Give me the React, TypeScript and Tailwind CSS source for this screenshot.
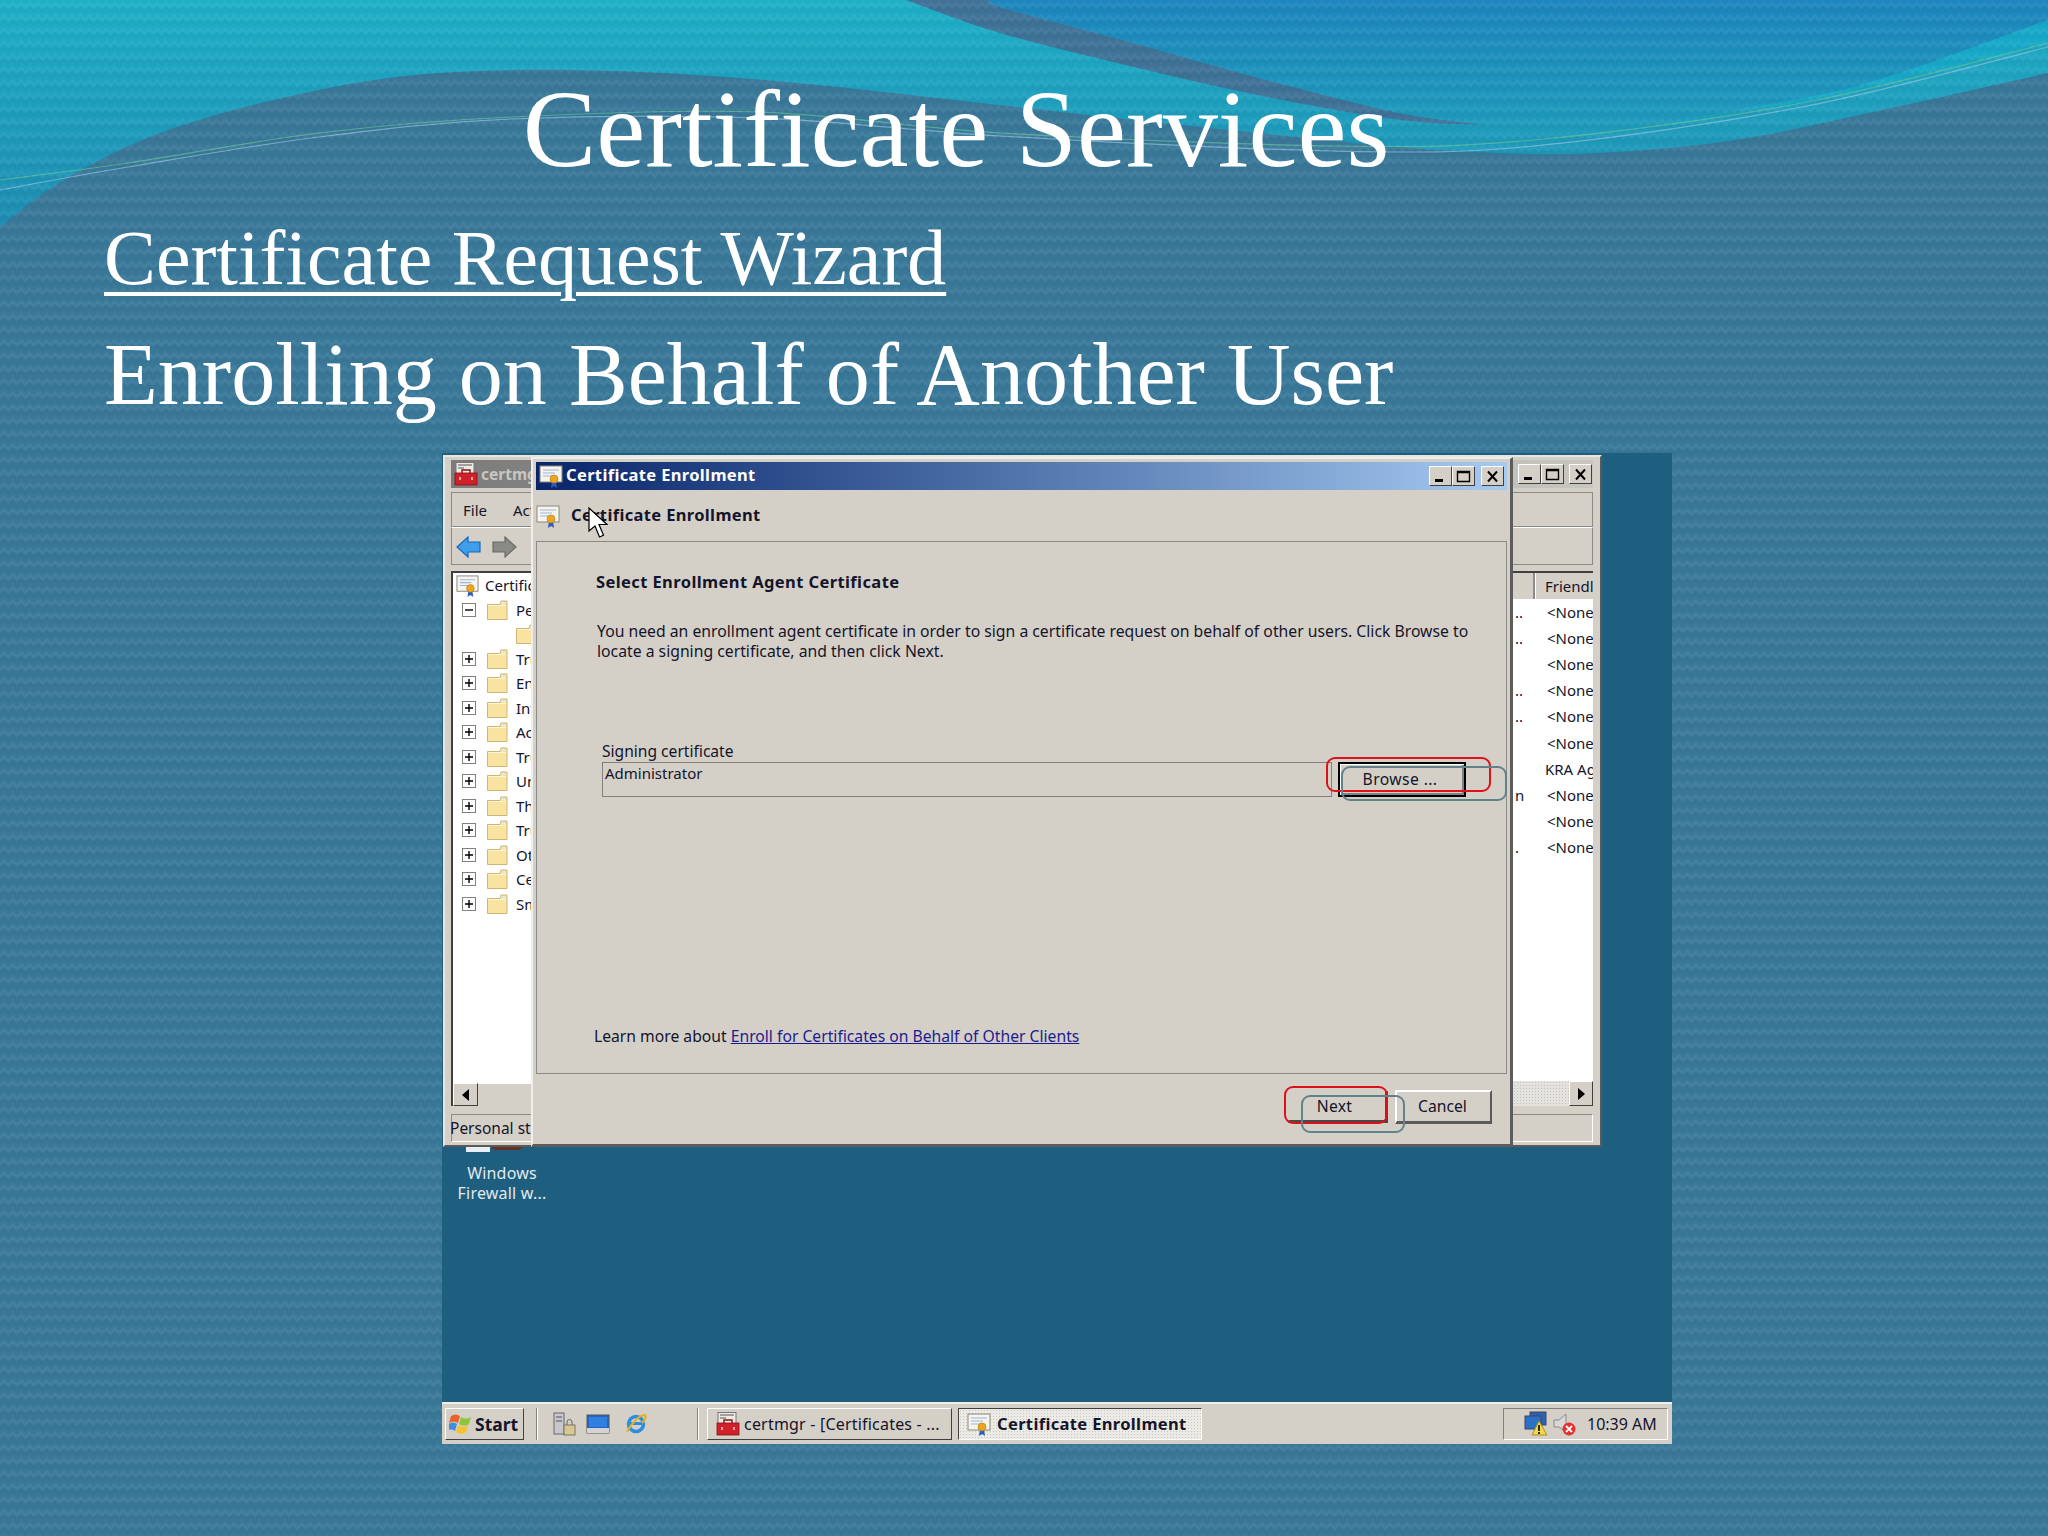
import React from "react";

function smooth(pts: number[][]): string {
  let d = `M${pts[0][0]},${pts[0][1]}`;
  for (let i = 0; i < pts.length - 1; i++) {
    const p0 = pts[Math.max(0, i - 1)];
    const p1 = pts[i];
    const p2 = pts[i + 1];
    const p3 = pts[Math.min(pts.length - 1, i + 2)];
    const c1x = p1[0] + (p2[0] - p0[0]) / 6;
    const c1y = p1[1] + (p2[1] - p0[1]) / 6;
    const c2x = p2[0] - (p3[0] - p1[0]) / 6;
    const c2y = p2[1] - (p3[1] - p1[1]) / 6;
    d += ` C${c1x},${c1y} ${c2x},${c2y} ${p2[0]},${p2[1]}`;
  }
  return d;
}
const tail = (d: string) => d.replace(/^M[^ ]+/, "");

const hump = [[2048,73],[1868,113],[1735,140],[1601,153],[1501,153],[1400,147],[1134,120],[1000,105],[765,80],[574,70],[415,75],[287,97],[160,133],[64,180],[0,227]];
const outer = [[906,0],[1000,33],[1134,67],[1267,97],[1400,120],[1488,125]];
const inner = [[992,0],[1000,7],[1134,43],[1267,80],[1400,113],[1488,125]];
const blueLow = [[1488,125],[1601,130],[1735,110],[1868,83],[2048,20]];
const line1 = [[0,180],[128,163],[319,133],[510,117],[760,112],[1000,133],[1334,146],[1534,140],[1802,103],[2048,43]];
const line2 = [[0,190],[128,167],[319,137],[510,119],[760,118],[1000,136],[1334,151],[1534,146],[1802,107],[2048,47]];

function Backdrop() {
  return (
    <svg className="absolute inset-0" width="2048" height="1536" viewBox="0 0 2048 1536">
      <defs>
        <linearGradient id="teal" x1="0" y1="0" x2="0" y2="1">
          <stop offset="0" stopColor="#1fb0c8" />
          <stop offset="1" stopColor="#1f8cb2" />
        </linearGradient>
        <linearGradient id="blue" x1="0" y1="0" x2="0" y2="1">
          <stop offset="0" stopColor="#1d86be" />
          <stop offset="1" stopColor="#1f9cbc" />
        </linearGradient>
        <pattern id="knit" width="17" height="13" patternUnits="userSpaceOnUse">
          <path d="M0,7 L4.25,3 L8.5,7 L12.75,3 L17,7" fill="none" stroke="#ffffff" strokeOpacity="0.05" strokeWidth="3" />
          <path d="M0,12 L4.25,8 L8.5,12 L12.75,8 L17,12" fill="none" stroke="#000000" strokeOpacity="0.03" strokeWidth="3" />
        </pattern>
      </defs>
      <rect width="2048" height="1536" fill="#3a7899" />
      <path d={`M0,0 L2048,0 L2048,73 ${tail(smooth(hump))} Z`} fill="url(#teal)" />
      <path d={`${smooth(outer)} ${tail(smooth([...inner].reverse()))} Z`} fill="#3f7398" />
      <path d={`${smooth(inner)} ${tail(smooth(blueLow))} L2048,0 Z`} fill="url(#blue)" />
      <path d={`M2048,20 ${tail(smooth([...blueLow].reverse().slice(0, 3)))} L1802,103 L2048,43 Z`} fill="#18a8c8" />
      <path d={smooth(line1)} fill="none" stroke="#63c29a" strokeOpacity="0.7" strokeWidth="1.2" />
      <path d={smooth(line2)} fill="none" stroke="#9cc6e4" strokeOpacity="0.65" strokeWidth="1.2" />
      <rect width="2048" height="1536" fill="url(#knit)" />
    </svg>
  );
}

function CertIcon({ size = 24 }: { size?: number }) {
  return (
    <svg width={size} height={size} viewBox="0 0 24 24" className="shrink-0">
      <rect x="1" y="2" width="22" height="16" fill="#f6f4ee" stroke="#8a8878" strokeWidth="1" />
      <path d="M4 6h16M4 9h12M4 12h9" stroke="#9db4d8" strokeWidth="1.2" />
      <path d="M13 17l-1 7 3-2 3 2-1-7z" fill="#2a5cc0" />
      <circle cx="15" cy="15" r="4" fill="#e8a623" stroke="#b57a10" strokeWidth="0.6" />
    </svg>
  );
}

function MgrIcon({ size = 24 }: { size?: number }) {
  return (
    <svg width={size} height={size} viewBox="0 0 24 24" className="shrink-0">
      <rect x="2" y="0.5" width="18" height="15" fill="#eceae4" stroke="#777" strokeWidth="1" />
      <path d="M4 3h14M4 6h6" stroke="#555" strokeWidth="1.2" />
      <rect x="1" y="11" width="22" height="12" fill="#d0202a" stroke="#8a1016" strokeWidth="0.8" />
      <path d="M8 11V8h8v3" fill="none" stroke="#8a1016" strokeWidth="1.4" />
      <path d="M6 15v3M18 15v3" stroke="#f6c0c0" strokeWidth="1.6" />
    </svg>
  );
}

function Folder({ w = 21 }: { w?: number }) {
  return (
    <svg width={w} height="20" viewBox="0 0 21 20" className="shrink-0">
      <path d="M0.5 4.5 H13 L14 1 H20 V19.5 H0.5 Z" fill="#f8e3a0" stroke="#cdb672" strokeWidth="1" />
      <rect x="14" y="2" width="5" height="2" fill="#dce8f0" />
      <path d="M1.5 5.5 H19" stroke="#fff6d8" strokeWidth="1" />
    </svg>
  );
}

function Expander({ open }: { open?: boolean }) {
  return (
    <svg width="14" height="14" viewBox="0 0 14 14" className="shrink-0">
      <rect x="0.5" y="0.5" width="13" height="13" fill="#fff" stroke="#808080" />
      <path d={open ? "M3 7h8" : "M3 7h8M7 3v8"} stroke="#000" strokeWidth="1.4" />
    </svg>
  );
}

function WinBtn({ kind }: { kind: "min" | "max" | "close" }) {
  return (
    <div className="flex h-[20px] w-[23px] items-center justify-center border border-t-white border-l-white border-r-[#404040] border-b-[#404040] bg-[#d4d0c8]">
      <svg width="17" height="15" viewBox="0 0 17 15">
        {kind === "min" && <rect x="3" y="10" width="8" height="3" fill="#000" />}
        {kind === "max" && <path d="M2.5 2.5h12v10h-12z M2.5 3.5h12" fill="none" stroke="#000" strokeWidth="1.4" />}
        {kind === "close" && <path d="M4 2.5l9 10M13 2.5l-9 10" stroke="#000" strokeWidth="2" />}
      </svg>
    </div>
  );
}

const tree: string[] = [
  "Trusted Root",
  "Enterprise",
  "Intermediate",
  "Active Directory",
  "Trusted Publishers",
  "Untrusted",
  "Third-Party",
  "Trusted People",
  "Other People",
  "Certificate",
  "Smart Card",
];

const listRows: [string, string][] = [
  ["..", "<None>"],
  ["..", "<None>"],
  ["", "<None>"],
  ["..", "<None>"],
  ["..", "<None>"],
  ["", "<None>"],
  ["", "KRA Agent"],
  ["n", "<None>"],
  ["", "<None>"],
  [".", "<None>"],
];

function CertMgrWindow() {
  return (
    <div className="absolute left-[1px] top-[2px] flex h-[692px] w-[1159px] flex-col border-t-2 border-l-2 border-r-2 border-b-2 border-t-[#e8e6e0] border-l-[#e8e6e0] border-r-[#5a5a5a] border-b-[#5a5a5a] bg-[#d4d0c8] pt-[3px] pl-[6px] pr-[7px] text-[15px] leading-[20px] text-[#14142a]">
      <div className="flex h-[28px] items-center justify-between bg-linear-to-r from-[#7c7c7c] to-[#c8c6c0] pr-[1px]">
        <div className="flex items-center gap-[3px] pl-[3px]">
          <MgrIcon size={24} />
          <span className="text-[15.5px] font-bold text-[#c8c6c0]">certmgr</span>
        </div>
        <div className="flex items-center">
          <WinBtn kind="min" />
          <WinBtn kind="max" />
          <div className="ml-[5px]">
            <WinBtn kind="close" />
          </div>
        </div>
      </div>
      <div className="mt-[4px] flex h-[35px] items-center gap-[26px] border border-[#8a8a8a] pl-[11px]">
        <span>File</span>
        <span>Action</span>
      </div>
      <div className="flex h-[38px] items-center gap-[11px] border border-t-white border-l-[#8a8a8a] border-r-[#8a8a8a] border-b-[#8a8a8a] pl-[4px] pt-[2px]">
        <svg width="25" height="22" viewBox="0 0 25 22">
          <path d="M1 11L12 1v5h12v10H12v5z" fill="#3f9ee8" stroke="#1a66b8" strokeWidth="1.2" />
        </svg>
        <svg width="25" height="22" viewBox="0 0 25 22">
          <path d="M24 11L13 1v5H1v10h12v5z" fill="#8a8a86" stroke="#6a6a66" strokeWidth="1.2" />
        </svg>
        <div className="ml-[9px] h-[28px] w-[2px] bg-[#9a9a94]" />
      </div>
      <div className="mt-[6px] flex h-[535px] border-t-2 border-l-2 border-[#404040] bg-white">
        <div className="flex w-[79px] shrink-0 flex-col overflow-hidden">
          <div className="flex h-[24.5px] shrink-0 items-center whitespace-nowrap pl-[3px]">
            <CertIcon size={23} />
            <span className="ml-[6px]">Certificates</span>
          </div>
          <div className="flex h-[24.5px] shrink-0 items-center whitespace-nowrap pl-[9px]">
            <Expander open />
            <span className="ml-[11px] flex"><Folder /></span>
            <span className="ml-[8px]">Personal</span>
          </div>
          <div className="flex h-[24.5px] shrink-0 items-center whitespace-nowrap pl-[63px]">
            <Folder />
          </div>
          {tree.map((label) => (
            <div key={label} className="flex h-[24.5px] shrink-0 items-center whitespace-nowrap pl-[9px]">
              <Expander />
              <span className="ml-[11px] flex"><Folder /></span>
              <span className="ml-[8px]">{label}</span>
            </div>
          ))}
          <div className="mt-auto flex h-[23px] shrink-0 items-stretch bg-[#d4d0c8]">
            <div className="flex w-[25px] items-center justify-center border border-t-white border-l-white border-r-[#404040] border-b-[#404040]">
              <svg width="8" height="12" viewBox="0 0 8 12"><path d="M7 0v12L0 6z" fill="#000" /></svg>
            </div>
            <div className="flex-1 border-t border-t-white bg-[#d4d0c8]" />
          </div>
        </div>
        <div className="flex-1" />
        <div className="flex w-[80px] shrink-0 flex-col overflow-hidden">
          <div className="flex h-[26px] shrink-0 items-stretch bg-[#d4d0c8]">
            <div className="w-[22px] shrink-0 border-r-2 border-r-[#8a8a8a]" />
            <div className="whitespace-nowrap border-l border-l-white pl-[9px] leading-[26px]">Friendly Name</div>
          </div>
          <div className="flex flex-col">
            {listRows.map(([a, b], i) => (
              <div key={i} className="flex h-[26.1px] items-center whitespace-nowrap">
                <span className="w-[10px] shrink-0 pl-[2px]">{a}</span>
                <span className={b === "<None>" ? "ml-[24px]" : "ml-[22px]"}>{b}</span>
              </div>
            ))}
          </div>
          <div className="mt-auto flex h-[25px] shrink-0 items-stretch">
            <div className="flex-1 bg-[#e4e2dc] bg-[radial-gradient(#c4c2bc_0.7px,transparent_0.8px)] bg-[length:3px_3px]" />
            <div className="flex w-[24px] items-center justify-center border border-t-white border-l-white border-r-[#404040] border-b-[#404040] bg-[#d4d0c8]">
              <svg width="8" height="12" viewBox="0 0 8 12"><path d="M1 0v12l7-6z" fill="#000" /></svg>
            </div>
          </div>
        </div>
      </div>
      <div className="mt-[8px] flex h-[28px] justify-between border border-t-[#8a8a8a] border-l-[#8a8a8a] border-r-white border-b-white">
        <span className="-ml-[2px] whitespace-nowrap text-[15.5px] leading-[26px]">Personal store</span>
      </div>
    </div>
  );
}

function Bevel({ children, className }: { children: React.ReactNode; className: string }) {
  return (
    <div className={`flex items-center justify-center bg-[#d4d0c8] ${className}`}>{children}</div>
  );
}

function EnrollDialog() {
  return (
    <div className="absolute left-[89px] top-[4px] flex h-[690px] w-[982px] flex-col border-t-2 border-l-2 border-r-[3px] border-b-[3px] border-t-[#efeeea] border-l-[#efeeea] border-r-[#5c5c5c] border-b-[#5c5c5c] bg-[#d4d0c8] pl-[3px] pr-[3px] pt-[3px] text-[15px] text-[#14142a]">
      <div className="flex h-[28px] shrink-0 items-center justify-between bg-linear-to-r from-[#0a246a] to-[#a6caf0] pr-[3px]">
        <div className="flex items-center gap-[3px] pl-[3px]">
          <CertIcon size={24} />
          <span className="-mt-[2px] text-[16.5px] font-bold tracking-[0.35px] text-white">Certificate Enrollment</span>
        </div>
        <div className="flex items-center">
          <WinBtn kind="min" />
          <WinBtn kind="max" />
          <div className="ml-[6px]">
            <WinBtn kind="close" />
          </div>
        </div>
      </div>
      <div className="flex h-[51px] shrink-0 items-center gap-[11px]">
        <CertIcon size={24} />
        <span className="-mt-[1px] text-[16.5px] font-bold tracking-[0.35px]">Certificate Enrollment</span>
      </div>
      <div className="relative flex h-[533px] shrink-0 flex-col border-[1.5px] border-[#8a8a86] pl-[59px]">
        <h2 className="mt-[29px] text-[16.5px] font-bold leading-[22px] tracking-[0.4px]">Select Enrollment Agent Certificate</h2>
        <p className="ml-[1px] mt-[28px] w-[900px] text-[15.75px] leading-[20px]">
          You need an enrollment agent certificate in order to sign a certificate request on behalf of other users. Click Browse to
          <br />
          locate a signing certificate, and then click Next.
        </p>
        <div className="ml-[6px] mt-[80px] text-[15.6px] leading-[20px]">Signing certificate</div>
        <div className="ml-[6px] mt-[1px] flex items-start">
          <div className="h-[35px] w-[730px] border border-[#808080] pl-[2px] leading-[20px]">Administrator</div>
          <button className="ml-[6px] flex h-[35px] w-[128px] items-center justify-center border-2 border-black bg-[#d4d0c8] pr-[4px] text-[15.7px] tracking-[0.4px] shadow-[inset_1px_1px_0_#ffffff,inset_-2px_-2px_0_#808080]">
            Browse ...
          </button>
        </div>
        <div className="-ml-[2px] mb-[27px] mt-auto text-[15.7px] leading-[20px]">
          Learn more about <a className="text-[#1c1c8e] underline">Enroll for Certificates on Behalf of Other Clients</a>
        </div>
      </div>
      <div className="flex flex-1 items-start justify-end gap-[7px] pr-[15px] pt-[16px] text-[15.7px]">
        <Bevel className="mt-[1px] h-[32px] w-[100px] border-b-[3px] border-r-[3px] border-t border-l border-r-[#4a4a4a] border-b-[#4a4a4a] border-t-[#d4d0c8] border-l-[#d4d0c8]">
          <span className="-ml-[5px] mt-[1px] tracking-[0.3px]">Next</span>
        </Bevel>
        <Bevel className="h-[34px] w-[97px] border-b-[3px] border-r-[2px] border-t-2 border-l-2 border-r-[#5a5a5a] border-b-[#5a5a5a] border-t-white border-l-white">
          <span className="-ml-[2px]">Cancel</span>
        </Bevel>
      </div>
      <div className="pointer-events-none absolute left-[793px] top-[298px] h-[35px] w-[165px] rounded-[9px] border-2 border-[#e01018]" />
      <div className="pointer-events-none absolute left-[808px] top-[307px] h-[35px] w-[166px] rounded-[9px] border-2 border-[#62828a]" />
      <div className="pointer-events-none absolute left-[751px] top-[627px] h-[38px] w-[104px] rounded-[9px] border-2 border-[#e01018]" />
      <div className="pointer-events-none absolute left-[768px] top-[636px] h-[38px] w-[104px] rounded-[9px] border-2 border-[#62828a]" />
    </div>
  );
}

function Cursor() {
  return (
    <svg className="absolute left-[146px] top-[54px]" width="20" height="32" viewBox="0 0 20 32">
      <path d="M1 1v23l6-5 4.5 11 4-1.8L11 17.5h8z" fill="#fff" stroke="#000" strokeWidth="1.2" />
    </svg>
  );
}

function Taskbar() {
  return (
    <div className="flex h-[42px] shrink-0 items-center gap-0 border-t-2 border-t-[#efeeea] bg-[#d4d0c8] pl-[3px] pr-[4px] text-[16px] text-[#14142a]">
      <div className="flex h-[32px] w-[79px] items-center gap-[2px] border border-t-white border-l-white border-r-[#404040] border-b-[#404040] pl-[3px]">
        <svg width="24" height="24" viewBox="0 0 24 24" className="shrink-0">
          <path d="M2 4c3-2 6-2 9 0l-2 7c-3-2-6-2-9 0z" fill="#e8622a" />
          <path d="M12 5c3 2 6 2 10 0l-2 7c-3 2-7 2-10 0z" fill="#8cc63f" />
          <path d="M0 12c3-2 5-2 8 0l-2 7c-3-2-5-2-8 0z" fill="#3f8fe0" />
          <path d="M9 13c3 2 7 2 10 0l-2 7c-3 2-7 2-10 0z" fill="#f4c430" />
        </svg>
        <span className="text-[17.5px] font-bold">Start</span>
      </div>
      <div className="ml-[12px] h-[32px] w-[2px] border-l border-r border-l-[#808080] border-r-white" />
      <div className="ml-[14px] flex items-center gap-[10px]">
        <svg width="24" height="24" viewBox="0 0 24 24">
          <rect x="2" y="1" width="10" height="21" fill="#c8c8cc" stroke="#666" />
          <path d="M4 5h6M4 9h6" stroke="#555" />
          <rect x="12" y="13" width="11" height="10" fill="#d8c890" stroke="#776" />
          <path d="M15 13v-3a2.5 2.5 0 015 0v3" fill="none" stroke="#666" />
        </svg>
        <svg width="24" height="24" viewBox="0 0 24 24">
          <rect x="1" y="3" width="22" height="18" fill="#2a62c8" stroke="#555" />
          <rect x="3" y="5" width="18" height="10" fill="#2f80e0" />
          <rect x="1" y="16" width="22" height="5" fill="#d4d4d4" />
        </svg>
        <svg className="ml-[4px]" width="24" height="24" viewBox="0 0 24 24">
          <circle cx="12" cy="12" r="7.5" fill="none" stroke="#2a8fe0" strokeWidth="3.5" />
          <path d="M6 11.5h13" stroke="#2a8fe0" strokeWidth="3" />
          <path d="M3 20C8 10 16 3 21 3c2 2-1 6-3 8" fill="none" stroke="#e8b020" strokeWidth="2" />
        </svg>
      </div>
      <div className="ml-[49px] h-[32px] w-[2px] border-l border-r border-l-[#808080] border-r-white" />
      <div className="ml-[8px] flex h-[32px] w-[245px] items-center gap-[4px] border border-t-white border-l-white border-r-[#404040] border-b-[#404040] pl-[8px]">
        <MgrIcon size={24} />
        <span className="whitespace-nowrap tracking-[0.2px]">certmgr - [Certificates - ...</span>
      </div>
      <div className="ml-[6px] flex h-[32px] w-[244px] items-center gap-[6px] border border-t-[#404040] border-l-[#404040] border-r-white border-b-white bg-[#eceae4] bg-[radial-gradient(#c8c6c0_0.7px,transparent_0.8px)] bg-[length:3px_3px] pl-[8px]">
        <CertIcon size={24} />
        <span className="whitespace-nowrap text-[16.5px] font-bold tracking-[0.35px]">Certificate Enrollment</span>
      </div>
      <div className="ml-auto flex h-[32px] w-[165px] items-center border border-t-[#808080] border-l-[#808080] border-r-white border-b-white pl-[20px]">
        <svg width="25" height="26" viewBox="0 0 25 26">
          <rect x="6" y="1" width="16" height="13" fill="#2a62b8" stroke="#445" />
          <rect x="1" y="5" width="16" height="13" fill="#2a70c8" stroke="#445" />
          <path d="M15 10l-7 14h15z" fill="#f4d84a" stroke="#a89020" />
          <path d="M15 14v6M15 21v2" stroke="#000" strokeWidth="1.6" />
        </svg>
        <svg className="ml-[3px]" width="25" height="26" viewBox="0 0 25 26">
          <path d="M2 9h5l7-6v18l-7-5H2z" fill="#d8d8d8" stroke="#888" />
          <circle cx="17" cy="18" r="6.5" fill="#e83030" />
          <path d="M14 15l6 6M20 15l-6 6" stroke="#fff" strokeWidth="1.8" />
        </svg>
        <span className="ml-[10px] whitespace-nowrap">10:39 AM</span>
      </div>
    </div>
  );
}

export default function App() {
  return (
    <div className="relative h-[1536px] w-[2048px] overflow-hidden bg-[#3a7899] font-['Liberation_Serif',serif]">
      <Backdrop />
      <div className="relative pt-[74px] text-white">
        <h1 className="ml-[104px] w-[1704px] text-center text-[110.3px] leading-[110px]">Certificate Services</h1>
        <div className="ml-[104px] mt-[29px] text-[77.8px] leading-[90px] underline decoration-[4px] underline-offset-[8px]">Certificate Request Wizard</div>
        <div className="ml-[104px] mt-[21px] text-[88.1px] leading-[100px]">Enrolling on Behalf of Another User</div>
      </div>
      <div className="relative ml-[442px] mt-[29px] flex h-[991px] w-[1230px] flex-col bg-[#1e5e7e] font-['Noto_Sans',sans-serif]">
        <div className="relative flex-1">
          <div className="absolute left-[24px] top-[690px] flex w-[70px] flex-col">
            <div className="flex h-[10px]">
              <div className="h-[9px] w-[24px] bg-[#e6eef6]" />
              <div className="h-[7px] w-[34px] rounded-b-[8px] bg-[#6a3020]" />
            </div>
          </div>
          <div className="absolute left-[10px] top-[710px] w-[100px] text-center text-[16px] leading-[20px] tracking-[0.2px] text-[#e2eaf0]">
            Windows
            <br />
            Firewall w...
          </div>
          <CertMgrWindow />
          <EnrollDialog />
          <Cursor />
        </div>
        <Taskbar />
      </div>
    </div>
  );
}
